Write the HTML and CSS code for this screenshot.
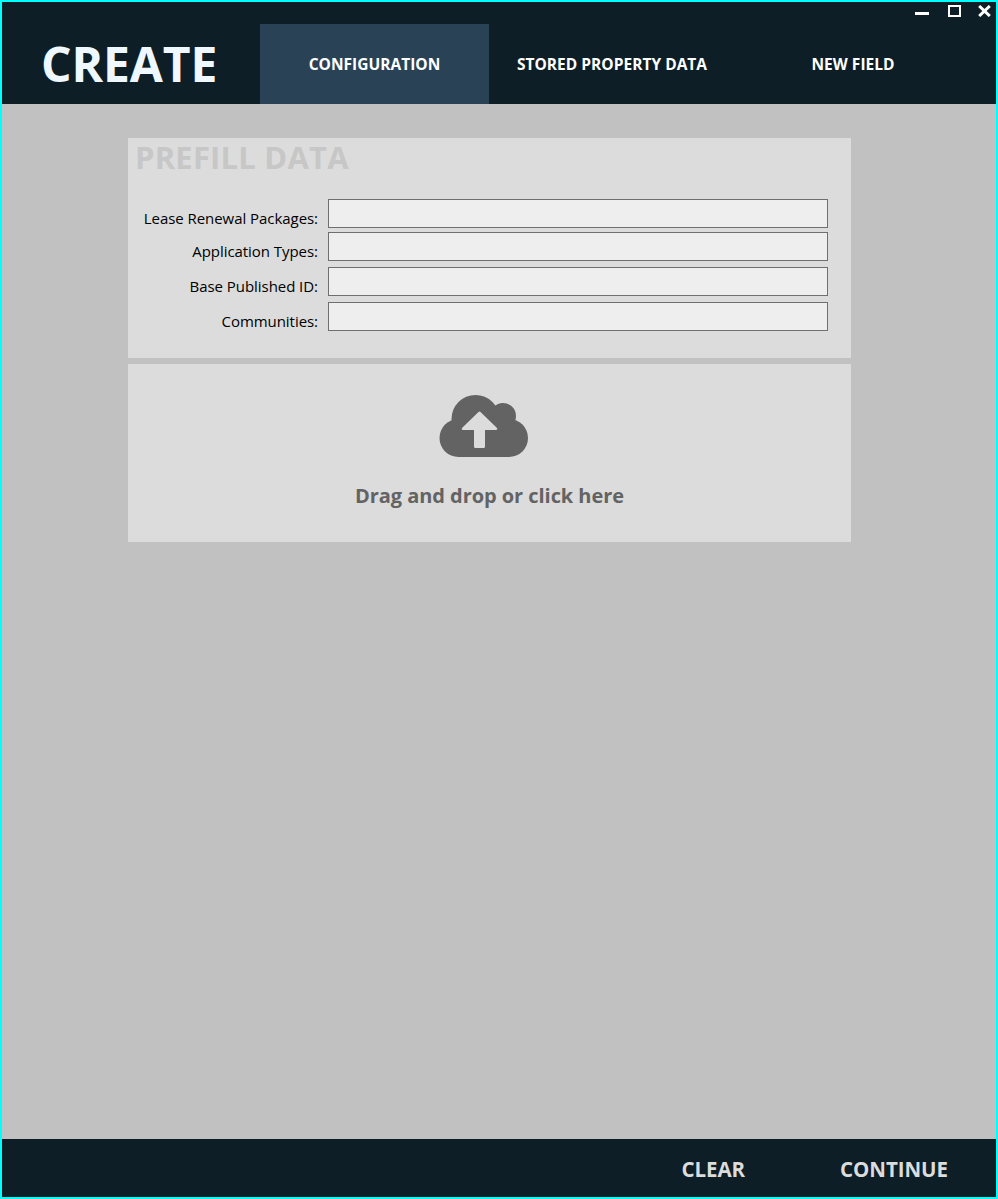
FILE: index.html
```html
<!DOCTYPE html>
<html lang="en">
<head>
<meta charset="utf-8">
<title>Create</title>
<link rel="stylesheet" href="styles.css">
</head>
<body>
<div class="window">
  <header class="header">
    <h1 class="brand">CREATE</h1>
    <nav class="tabs">
      <a class="tab tab-config active">CONFIGURATION</a>
      <a class="tab tab-stored">STORED PROPERTY DATA</a>
      <a class="tab tab-new">NEW FIELD</a>
    </nav>
    <div class="controls">
      <svg class="ctl ctl-min" width="14" height="12" viewBox="0 0 14 12"><rect x="0" y="7" width="14" height="3" fill="#fff"/></svg>
      <svg class="ctl ctl-max" width="13" height="12" viewBox="0 0 13 12"><rect x="1" y="1" width="11" height="10" fill="none" stroke="#fff" stroke-width="2"/></svg>
      <svg class="ctl" width="13" height="12" viewBox="0 0 13 12"><path d="M1.2 1 L11.8 11 M11.8 1 L1.2 11" stroke="#fff" stroke-width="3" fill="none"/></svg>
    </div>
  </header>
  <main class="main">
    <section class="panel prefill">
      <h2 class="panel-title">PREFILL DATA</h2>
      <div class="form">
        <div class="row row-a"><label class="lbl">Lease Renewal Packages:</label><div class="input"></div></div>
        <div class="row row-b"><label class="lbl">Application Types:</label><div class="input"></div></div>
        <div class="row row-c"><label class="lbl">Base Published ID:</label><div class="input"></div></div>
        <div class="row row-c"><label class="lbl">Communities:</label><div class="input"></div></div>
      </div>
    </section>
    <section class="panel drop">
      <svg class="cloud" width="90" height="64" viewBox="0 0 90 64">
        <g fill="#636363">
          <circle cx="36.500" cy="25" r="24"/>
          <circle cx="64" cy="22" r="13"/>
          <circle cx="19.500" cy="44" r="19"/>
          <circle cx="70" cy="44" r="19"/>
          <rect x="19.500" y="30" width="50.500" height="33"/>
        </g>
        <path fill="#dcdcdc" d="M39.500 18 Q40.500 17 41.500 18 L57.500 33.500 Q59.500 36 56.500 36 L46 36 L46 52.500 Q46 54 44.500 54 L36.500 54 Q35 54 35 52.500 L35 36 L24.500 36 Q21.500 36 23.500 33.500 Z"/>
      </svg>
      <div class="drop-text">Drag and drop or click here</div>
    </section>
  </main>
  <footer class="footer">
    <a class="fbtn fbtn-clear">CLEAR</a>
    <a class="fbtn">CONTINUE</a>
  </footer>
</div>
</body>
</html>
```
FILE: styles.css
```css
* { box-sizing: border-box; }
html, body { margin: 0; padding: 0; height: 100%; }
body { font-family: "Open Sans", "Noto Sans", "Liberation Sans", sans-serif; }
.window {
  width: 998px; height: 1199px;
  border: 2px solid #00ffff;
  display: flex; flex-direction: column;
  background: #c1c1c1;
  overflow: hidden;
}
.header {
  height: 102px; flex: none;
  background: #0d1e27;
  display: flex; align-items: flex-end;
  position: relative;
}
.brand {
  margin: 0; width: 258px; height: 80px;
  padding-left: 39px;
  font-size: 48px; font-weight: 700; line-height: 80px;
  letter-spacing: -0.1px;
  color: #f0f8ff;
}
.tabs { display: flex; height: 80px; }
.tab {
  height: 80px; display: flex; align-items: center; justify-content: center;
  color: #fff; font-size: 15.500px; font-weight: 700; letter-spacing: 0.02px;
  padding-bottom: 1px;
}
.tab-config { width: 229px; }
.tab-stored { width: 246px; }
.tab-new { width: 236px; }
.active { background: #2a4256; }
.controls {
  position: absolute; top: 3px; right: 5px;
  display: flex; align-items: flex-start;
}
.ctl { display: block; }
.ctl-min { margin-right: 19px; }
.ctl-max { margin-right: 17px; }
.main {
  flex: 1;
  padding: 34px 0 0 126px;
  display: flex; flex-direction: column; gap: 6px;
}
.panel { width: 723px; background: #dcdcdc; }
.prefill { height: 220px; padding: 0 23px 0 7px; }
.panel-title {
  margin: 0; height: 61px;
  font-size: 31px; font-weight: 700; line-height: 38px;
  color: #c7c7c7; letter-spacing: 0.2px;
}
.form { display: flex; flex-direction: column; }
.row { display: flex; height: 29px; align-items: stretch; }
.row-b { margin-top: 4px; }
.row-c { margin-top: 6px; }
.lbl {
  width: 190px; text-align: right;
  font-size: 15px; line-height: 20px;
  padding-top: 9px;
  color: #000; letter-spacing: -0.05px;
  white-space: nowrap;
}
.input {
  margin-left: 10px;
  width: 500px;
  background: #eeeeee;
  border: 1px solid #6f6f6f;
}
.prefill .row { margin-left: -7px; }
.drop {
  height: 178px;
  display: flex; flex-direction: column; align-items: center;
  padding-top: 30px;
}
.cloud { display: block; margin-left: -11px; }
.drop-text {
  margin-top: 23px;
  font-size: 20px; font-weight: 700; line-height: 30px;
  color: #636363; letter-spacing: -0.05px;
}
.footer {
  height: 58px; flex: none;
  background: #0d1e27;
  display: flex; align-items: center; justify-content: flex-end;
  padding: 1px 48px 0 0; gap: 95px;
}
.fbtn { color: #dcdcdc; font-size: 20.500px; font-weight: 700; letter-spacing: -0.05px; }
```
